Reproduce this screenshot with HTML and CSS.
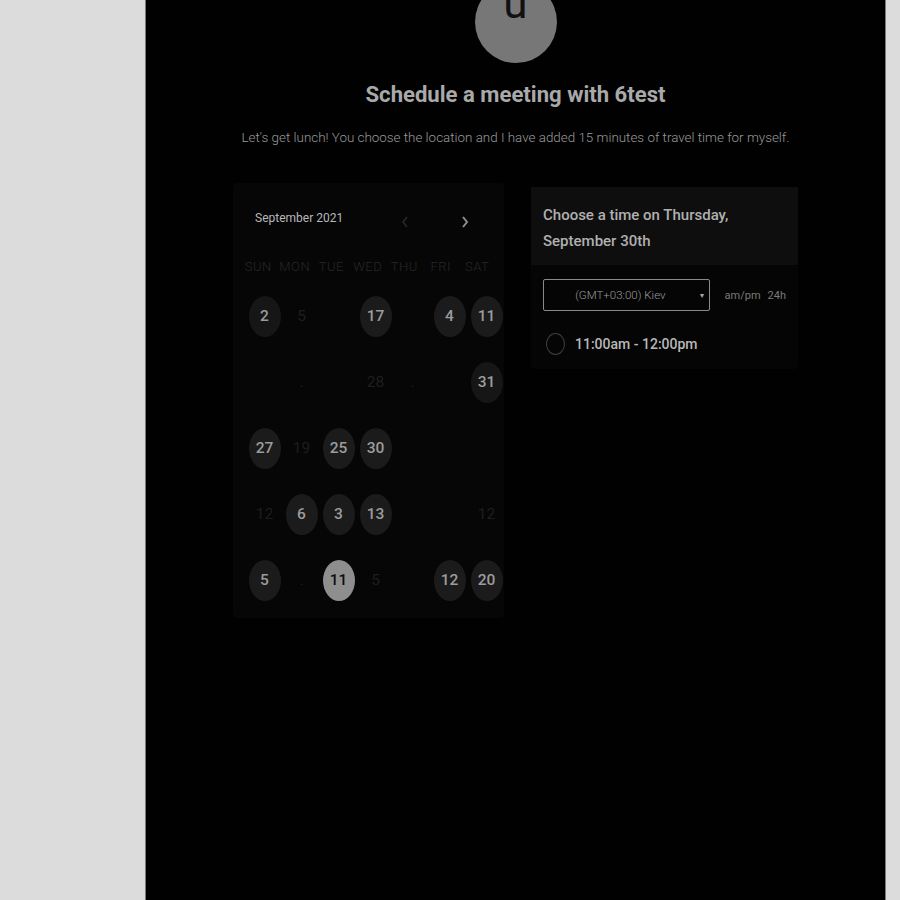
FILE: index.html
```html
<!DOCTYPE html>
<html lang="en">
<head>
<meta charset="utf-8">
<title>Schedule a meeting with 6test</title>
<link rel="stylesheet" href="styles.css">
</head>
<body>
<div class="page">
  <div class="avatar"><span>u</span></div>
  <h1 class="title">Schedule a meeting with 6test</h1>
  <p class="subtitle">Let's get lunch! You choose the location and I have added 15 minutes of travel time for myself.</p>

  <div class="main">
    <section class="calendar">
      <div class="cal-head">
        <span class="month">September 2021</span>
        <span class="arrows">
          <svg class="arrow prev" width="10" height="14" viewBox="0 0 10 14"><path d="M7 2 L3 7 L7 12" fill="none" stroke="currentColor" stroke-width="1.5"/></svg>
          <svg class="arrow next" width="10" height="14" viewBox="0 0 10 14"><path d="M3 2 L7 7 L3 12" fill="none" stroke="currentColor" stroke-width="2"/></svg>
        </span>
      </div>
      <div class="weekdays">
        <span>SUN</span><span>MON</span><span>TUE</span><span>WED</span><span>THU</span><span>FRI</span><span>SAT</span>
      </div>
      <div class="days">
        <span class="day on speck">2</span><span class="day dim">5</span><span class="day"></span><span class="day on">17</span><span class="day"></span><span class="day on">4</span><span class="day on">11</span>
        <span class="day"></span><span class="day dim">.</span><span class="day"></span><span class="day dim">28</span><span class="day dim">.</span><span class="day"></span><span class="day on speck">31</span>
        <span class="day on">27</span><span class="day dim">19</span><span class="day on">25</span><span class="day on">30</span><span class="day"></span><span class="day"></span><span class="day"></span>
        <span class="day dim">12</span><span class="day on">6</span><span class="day on">3</span><span class="day on">13</span><span class="day"></span><span class="day"></span><span class="day dim">12</span>
        <span class="day on">5</span><span class="day dim">.</span><span class="day sel">11</span><span class="day dim">5</span><span class="day"></span><span class="day on">12</span><span class="day on">20</span>
      </div>
    </section>

    <section class="times">
      <div class="times-head">Choose a time on Thursday, September 30th</div>
      <div class="times-body">
        <div class="tz-row">
          <div class="tz-select"><span>(GMT+03:00) Kiev</span><span class="caret">&#9662;</span></div>
          <div class="fmt"><span>am/pm</span><span>24h</span></div>
        </div>
        <label class="slot"><span class="radio"></span><span>11:00am - 12:00pm</span></label>
      </div>
    </section>
  </div>
</div>
</body>
</html>
```

FILE: styles.css
```css
* { box-sizing: border-box; }
html, body { margin: 0; padding: 0; }
body {
  background: #dcdcdc;
  font-family: Roboto, "Liberation Sans", sans-serif;
  overflow: hidden;
}
.page {
  margin-left: 145px;
  width: 741px;
  height: 900px;
  background: #010101;
  border-left: 1px solid #7a7a7a;
  border-right: 1px solid #7a7a7a;
  display: flex;
  flex-direction: column;
  align-items: center;
  overflow: hidden;
}
.avatar {
  width: 82px;
  height: 82px;
  margin-top: -19px;
  border-radius: 50%;
  background: #777777;
  display: flex;
  justify-content: center;
  align-items: flex-start;
  flex: none;
}
.avatar span {
  font-size: 44px;
  line-height: 1;
  color: #111;
  font-weight: 400;
}
.title {
  margin: 17px 0 0;
  font-size: 22.1px;
  line-height: 28px;
  font-weight: 700;
  color: #a9a9a9;
}
.subtitle {
  margin: 21px 0 0;
  font-size: 13.4px;
  line-height: 18px;
  font-weight: 300;
  color: #9a9a9a;
}
.main {
  margin-top: 36px;
  display: flex;
  gap: 27px;
  align-items: flex-start;
}
.calendar {
  width: 271px;
  height: 435px;
  background: #060606;
  border-radius: 3px;
  padding-top: 24px;
}
.cal-head {
  display: flex;
  align-items: center;
  padding-left: 22px;
  height: 22px;
}
.month {
  font-size: 12px;
  color: #b8b8b8;
  width: 145px;
}
.arrows { display: flex; gap: 50px; margin-top: 8px; }
.arrow.prev { color: #2a2a2a; }
.arrow.next { color: #8e8e8e; }
.weekdays {
  margin-top: 30px;
  padding-left: 7px;
  display: grid;
  grid-template-columns: repeat(7, 36.5px);
  font-size: 13px;
  font-weight: 300;
  color: #262626;
  letter-spacing: 0.5px;
}
.weekdays span { text-align: center; }
.days {
  margin-top: 9px;
  padding-left: 13px;
  display: grid;
  grid-template-columns: repeat(7, 37px);
  grid-auto-rows: 66px;
  align-items: center;
}
.day {
  width: 32px;
  height: 41px;
  margin: 0 auto;
  border-radius: 50%;
  display: flex;
  align-items: center;
  justify-content: center;
  font-size: 15.5px;
  font-weight: 500;
  color: #2a2a2a;
}
.day.dim { font-weight: 400; color: #1e1e1e; }
.day.on { background: #1b1b1b; color: #9c9c9c; }
.day.speck { background: #161616; }
.day.sel { background: #8e8e8e; color: #0e0e0e; }

.times {
  margin-top: 4px;
  width: 267px;
  background: #050505;
  border-radius: 3px;
}
.times-head {
  background: #0e0e0e;
  height: 78px;
  padding: 15px 40px 0 12px;
  font-size: 15px;
  line-height: 26px;
  font-weight: 500;
  color: #b0b0b0;
}
.times-body { padding: 14px 12px 14px 12px; }
.tz-row { display: flex; align-items: center; }
.tz-select {
  width: 171px;
  height: 32px;
  border: 1px solid #8a8a8a;
  border-radius: 2px;
  display: flex;
  align-items: center;
  justify-content: flex-end;
  padding-right: 5px;
  font-size: 11.5px;
  font-weight: 300;
  color: #9a9a9a;
}
.tz-select .caret { font-size: 8px; margin-left: 34px; color: #aaa; }
.fmt {
  margin-left: 15px;
  display: flex;
  gap: 7px;
  font-size: 11px;
  color: #7a7a7a;
}
.slot {
  margin-top: 22px;
  display: flex;
  align-items: center;
  font-size: 14px;
  font-weight: 500;
  color: #b8b8b8;
}
.radio {
  width: 19px;
  height: 22px;
  border-radius: 50%;
  border: 1px solid #3e3e3e;
  margin: 0 10px 0 3px;
}
```
